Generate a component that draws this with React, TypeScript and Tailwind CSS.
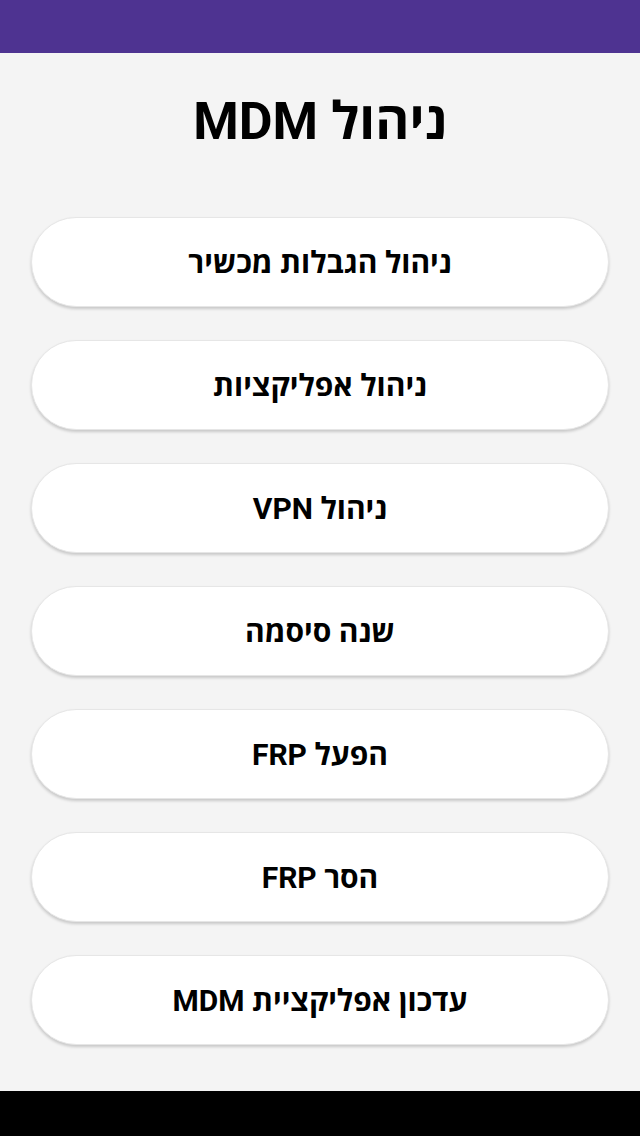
const items = [
    "ניהול הגבלות מכשיר",
    "ניהול אפליקציות",
    "ניהול VPN",
    "שנה סיסמה",
    "הפעל FRP",
    "הסר FRP",
    "עדכון אפליקציית MDM",
];

function App() {
    return (
        <div
            dir="rtl"
            className="h-screen flex flex-col bg-[#f4f4f4]"
            style={{ fontFamily: 'Roboto, "Open Sans", "DejaVu Sans", sans-serif' }}
        >
            <div className="h-[53px] bg-[#4e3391]" />
            <div className="flex-1 flex flex-col">
                <h1 className="text-center text-[52px] leading-[60px] font-bold text-black pt-[39px]">
                    ניהול MDM
                </h1>
                <div className="flex flex-col gap-[33px] px-[31px] mt-[65px]">
                    {items.map((label) => (
                        <button
                            key={label}
                            className="h-[90px] w-full rounded-full bg-white border border-[#e6e6e6] shadow-[0_2px_3px_rgba(0,0,0,0.18)] text-[30px] font-bold text-black"
                        >
                            {label}
                        </button>
                    ))}
                </div>
            </div>
            <div className="h-[45px] bg-black" />
        </div>
    );
}

export default App;
